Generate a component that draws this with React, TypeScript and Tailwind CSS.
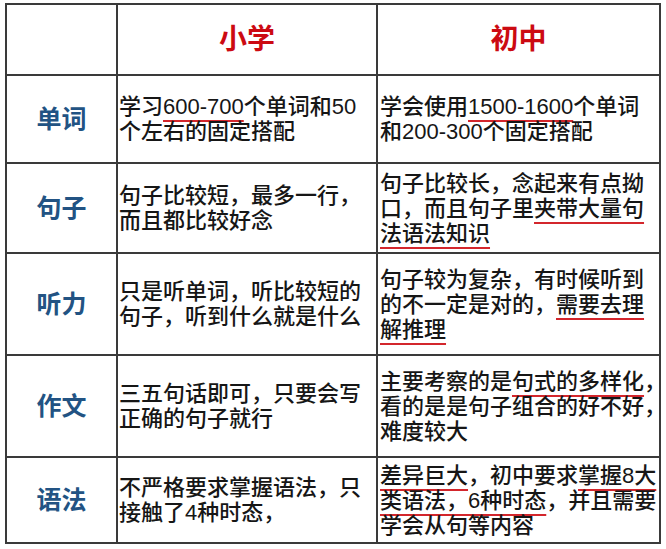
import React from "react";

const U = ({ children }: { children: React.ReactNode }) => (
  <span className="underline decoration-[#d3262c] decoration-2 underline-offset-[6px] [text-decoration-skip-ink:none]">
    {children}
  </span>
);

type Row = {
  label: string;
  primary: React.ReactNode[];
  junior: React.ReactNode[];
};

const rows: Row[] = [
  {
    label: "单词",
    primary: [<>学习<U>600-700</U>个单词和50</>, "个左右的固定搭配"],
    junior: [<>学会使用<U>1500-1600</U>个单词</>, "和200-300个固定搭配"],
  },
  {
    label: "句子",
    primary: ["句子比较短，最多一行，", "而且都比较好念"],
    junior: [
      "句子比较长，念起来有点拗",
      <>口，而且句子里<U>夹带大量句</U></>,
      <U>法语法知识</U>,
    ],
  },
  {
    label: "听力",
    primary: ["只是听单词，听比较短的", "句子，听到什么就是什么"],
    junior: [
      "句子较为复杂，有时候听到",
      <>的不一定是对的，<U>需要去理</U></>,
      <U>解推理</U>,
    ],
  },
  {
    label: "作文",
    primary: ["三五句话即可，只要会写", "正确的句子就行"],
    junior: [
      <>主要考察的是<U>句式的多样化</U>，</>,
      "看的是是句子组合的好不好，",
      "难度较大",
    ],
  },
  {
    label: "语法",
    primary: ["不严格要求掌握语法，只", "接触了4种时态，"],
    junior: [
      <><U>差异巨大</U>，初中要求<U>掌握8大</U></>,
      <><U>类语法，6种时态</U>，并且需要</>,
      "学会从句等内容",
    ],
  },
];

function Lines({ lines }: { lines: React.ReactNode[] }) {
  return (
    <div className="whitespace-nowrap">
      {lines.map((l, i) => (
        <div key={i}>{l}</div>
      ))}
    </div>
  );
}

export default function App() {
  return (
    <div
      className="w-[666px] h-[549px] bg-white overflow-hidden pt-[3px] pl-[5px] text-[#161616]"
      style={{ fontFamily: '"Liberation Sans", "Noto Sans CJK SC", sans-serif' }}
    >
      <div className="grid w-fit grid-cols-[109px_258px_281px] grid-rows-[69px_86px_88px_100px_100px_84px] gap-[2px] bg-[#3a3a3a] p-[2px] text-[22px] leading-[25px] font-medium">
        <div className="bg-white" />
        <div className="bg-white flex items-center justify-center text-[28px] font-bold text-[#cc0a12]">
          小学
        </div>
        <div className="bg-white flex items-center justify-center text-[28px] font-bold text-[#cc0a12]">
          初中
        </div>
        {rows.map((r) => (
          <React.Fragment key={r.label}>
            <div className="bg-white flex items-center justify-center text-[25px] font-bold text-[#225383]">
              {r.label}
            </div>
            <div className="bg-white flex items-center pl-[1px]">
              <Lines lines={r.primary} />
            </div>
            <div className="bg-white flex items-center pl-[2px]">
              <Lines lines={r.junior} />
            </div>
          </React.Fragment>
        ))}
      </div>
    </div>
  );
}
